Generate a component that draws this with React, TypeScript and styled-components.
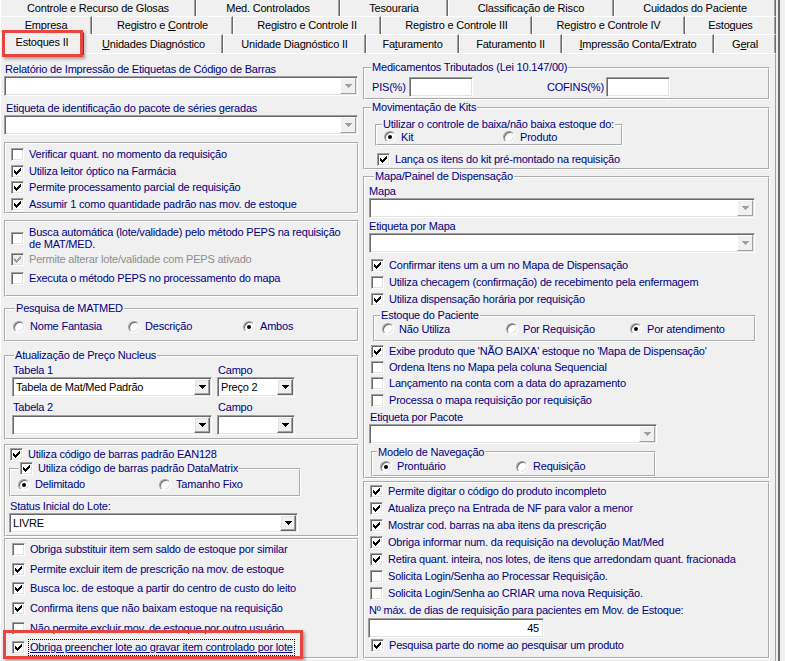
import React from "react";
import styled, { createGlobalStyle, css } from "styled-components";

const NAVY = "#000080";

const GlobalStyle = createGlobalStyle`
  html, body { margin: 0; padding: 0; background: #f0f0f0; }
  body {
    font-family: "Liberation Sans", Arial, sans-serif;
    font-size: 11px;
    letter-spacing: -0.2px;
  }
  * { box-sizing: border-box; }
`;

const Screen = styled.div`
  position: relative;
  width: 785px;
  height: 661px;
  overflow: hidden;
  display: flex;
  background: #f0f0f0;
`;

const Window = styled.div`
  width: 778px;
  flex-shrink: 0;
  display: flex;
  flex-direction: column;
`;

const EdgeBar = styled.div`
  width: 2px;
  flex-shrink: 0;
  background: #6b6b6b;
`;

/* ---------- tab strip ---------- */

const TabStrip = styled.div`
  width: 776px;
  display: flex;
  flex-direction: column;
`;

const TabRow = styled.div<{ $h: number }>`
  display: flex;
  height: ${(p) => p.$h}px;
`;

const Tab = styled.div<{ $w: number; $flat?: boolean; $open?: boolean }>`
  position: relative;
  width: ${(p) => p.$w}px;
  flex-shrink: 0;
  display: flex;
  align-items: center;
  justify-content: center;
  border-top: ${(p) => (p.$flat ? "none" : "1px solid #fff")};
  border-left: 1px solid #fff;
  border-right: 1px solid #696969;
  box-shadow: inset -1px 0 0 #a0a0a0;
  color: #000;
  line-height: 13px;
  white-space: nowrap;
  background: #f0f0f0;
  ${(p) =>
    p.$open &&
    css`
      z-index: 2;
      align-self: flex-start;
      margin-top: -2px;
      height: calc(100% + 4px);
      padding-bottom: 4px;
    `}
  u { text-decoration: underline; }
`;

const TabLabel = styled.span`
  white-space: pre;
`;

/* ---------- page ---------- */

const Page = styled.div`
  flex: 1;
  width: 776px;
  border-top: 1px solid #fff;
  border-left: 1px solid #fff;
  border-right: 1px solid #a0a0a0;
  display: flex;
  align-items: flex-start;
  gap: 4px;
  padding-left: 3px;
`;

const Column = styled.div<{ $w: number }>`
  width: ${(p) => p.$w}px;
  flex-shrink: 0;
  display: flex;
  flex-direction: column;
`;

const Group = styled.fieldset<{ $w: number; $h: number; $mt?: number; $ml?: number }>`
  margin: ${(p) => p.$mt ?? 0}px 0 0 ${(p) => p.$ml ?? 0}px;
  padding: 0;
  min-width: 0;
  width: ${(p) => p.$w}px;
  height: ${(p) => p.$h}px;
  flex-shrink: 0;
  border: 2px groove #fff;
  display: flex;
  flex-direction: column;
`;

const Caption = styled.legend<{ $ml: number }>`
  margin-left: ${(p) => p.$ml}px;
  padding: 0 1px;
  height: 13px;
  line-height: 13px;
  color: ${NAVY};
  display: flex;
  align-items: center;
  white-space: nowrap;
`;

const Label = styled.div<{ $mt?: number; $ml?: number }>`
  height: 13px;
  line-height: 13px;
  color: ${NAVY};
  white-space: nowrap;
  margin-top: ${(p) => p.$mt ?? 0}px;
  margin-left: ${(p) => p.$ml ?? 0}px;
`;

const sunken = css`
  border: 1px solid;
  border-color: #a0a0a0 #fff #fff #a0a0a0;
  box-shadow: inset 1px 1px 0 #696969, inset -1px -1px 0 #e3e3e3;
  background: #fff;
`;

const ComboFrame = styled.div<{ $w: number; $mt?: number; $ml?: number }>`
  ${sunken}
  width: ${(p) => p.$w}px;
  height: 20px;
  flex-shrink: 0;
  margin-top: ${(p) => p.$mt ?? 0}px;
  margin-left: ${(p) => p.$ml ?? 0}px;
  padding: 1px;
  display: flex;
  align-items: stretch;
`;

const ComboText = styled.div`
  flex: 1;
  display: flex;
  align-items: center;
  padding-left: 2px;
  color: #000;
  line-height: 13px;
  white-space: nowrap;
`;

const DropButton = styled.div<{ $off?: boolean }>`
  width: 16px;
  flex-shrink: 0;
  display: flex;
  align-items: center;
  justify-content: center;
  background: #f0f0f0;
  border: 1px solid;
  border-color: #fff #696969 #696969 #fff;
  box-shadow: inset -1px -1px 0 #a0a0a0, inset 1px 1px 0 #e3e3e3;
  color: ${(p) => (p.$off ? "#a0a0a0" : "#000")};
  ${(p) =>
    p.$off &&
    css`
      border-color: #fff #a0a0a0 #a0a0a0 #fff;
      box-shadow: none;
    `}
`;

const EditBox = styled.div<{ $w: number; $mt?: number; $ml?: number }>`
  ${sunken}
  width: ${(p) => p.$w}px;
  height: 20px;
  flex-shrink: 0;
  margin-top: ${(p) => p.$mt ?? 0}px;
  margin-left: ${(p) => p.$ml ?? 0}px;
  padding: 0 4px;
  display: flex;
  align-items: center;
  justify-content: flex-end;
  color: #000;
  line-height: 13px;
`;

const OptionRow = styled.div<{ $h?: number; $mt?: number; $ml?: number }>`
  display: flex;
  align-items: center;
  height: ${(p) => p.$h ?? 17}px;
  margin-top: ${(p) => p.$mt ?? 0}px;
  margin-left: ${(p) => p.$ml ?? 0}px;
  flex-shrink: 0;
`;

const BoxGlyph = styled.span<{ $off?: boolean }>`
  width: 13px;
  height: 13px;
  flex-shrink: 0;
  display: inline-flex;
  align-items: center;
  justify-content: center;
  border: 1px solid;
  border-color: #a0a0a0 #fff #fff #a0a0a0;
  box-shadow: inset 1px 1px 0 #696969, inset -1px -1px 0 #e3e3e3;
  background: ${(p) => (p.$off ? "#f0f0f0" : "#fff")};
  color: ${(p) => (p.$off ? "#a0a0a0" : "#000")};
`;

const RadioGlyph = styled.span<{ $on?: boolean }>`
  width: 12px;
  height: 12px;
  flex-shrink: 0;
  border-radius: 50%;
  border: 1px solid;
  border-color: #a0a0a0 #fff #fff #a0a0a0;
  box-shadow: inset 1px 1px 0 #696969, inset -1px -1px 0 #e3e3e3;
  background: #fff;
  display: flex;
  align-items: center;
  justify-content: center;
  &::after {
    content: "";
    width: 4px;
    height: 4px;
    border-radius: 50%;
    background: #000;
    display: ${(p) => (p.$on ? "block" : "none")};
  }
`;

const OptionText = styled.span<{ $off?: boolean; $lh?: number; $focus?: boolean }>`
  margin-left: 5px;
  color: ${(p) => (p.$off ? "#8d8d8d" : NAVY)};
  line-height: ${(p) => p.$lh ?? 13}px;
  white-space: nowrap;
  ${(p) =>
    p.$focus &&
    css`
      text-decoration: underline;
      outline: 1px dotted #000;
      outline-offset: 1px;
    `}
`;

const RadioRow = styled.div<{ $h: number; $pl: number; $mt?: number }>`
  display: flex;
  align-items: center;
  height: ${(p) => p.$h}px;
  padding-left: ${(p) => p.$pl}px;
  margin-top: ${(p) => p.$mt ?? 0}px;
  flex-shrink: 0;
`;

const RadioItem = styled.div<{ $w?: number }>`
  display: flex;
  align-items: center;
  flex-shrink: 0;
  width: ${(p) => (p.$w ? `${p.$w}px` : "auto")};
`;

const FieldPair = styled.div<{ $mt: number }>`
  display: flex;
  gap: 5px;
  margin-top: ${(p) => p.$mt}px;
  padding-left: 6px;
`;

const FieldCell = styled.div`
  display: flex;
  flex-direction: column;
`;

const TaxRow = styled.div`
  display: grid;
  grid-template-columns: 37px 64px 74px 59px 64px;
  align-items: center;
  height: 20px;
  margin-top: 3px;
  padding-left: 7px;
`;

const TaxLabel = styled.span`
  color: ${NAVY};
  line-height: 13px;
  white-space: nowrap;
`;

const Callout = styled.div<{ $x: number; $y: number; $w: number; $h: number }>`
  position: absolute;
  left: ${(p) => p.$x}px;
  top: ${(p) => p.$y}px;
  width: ${(p) => p.$w}px;
  height: ${(p) => p.$h}px;
  border: 3px solid #e8453f;
  box-shadow: 2px 2px 3px rgba(0, 0, 0, 0.35);
  pointer-events: none;
  z-index: 5;
`;

/* ---------- small drawings ---------- */

const CheckMark = () => (
  <svg width="7" height="7" viewBox="0 0 7 7" shapeRendering="crispEdges">
    <path
      fill="currentColor"
      d="M6 0h1v1H6zM5 1h2v1H5zM0 2h1v1H0zM4 2h3v1H4zM0 3h2v1H0zM3 3h3v1H3zM0 4h5v1H0zM1 5h3v1H1zM2 6h1v1H2z"
    />
  </svg>
);

const DownArrow = () => (
  <svg width="7" height="4" viewBox="0 0 7 4" shapeRendering="crispEdges">
    <path fill="currentColor" d="M0 0h7v1H0zM1 1h5v1H1zM2 2h3v1H2zM3 3h1v1H3z" />
  </svg>
);

/* ---------- widgets ---------- */

type CheckProps = {
  on?: boolean;
  off?: boolean;
  h?: number;
  mt?: number;
  ml?: number;
  lh?: number;
  focus?: boolean;
  children: React.ReactNode;
};

const Check = ({ on, off, h, mt, ml, lh, focus, children }: CheckProps) => (
  <OptionRow $h={h} $mt={mt} $ml={ml}>
    <BoxGlyph $off={off}>{on && <CheckMark />}</BoxGlyph>
    <OptionText $off={off} $lh={lh} $focus={focus}>
      {children}
    </OptionText>
  </OptionRow>
);

const Radio = ({ on, w, children }: { on?: boolean; w?: number; children: React.ReactNode }) => (
  <RadioItem $w={w}>
    <RadioGlyph $on={on} />
    <OptionText>{children}</OptionText>
  </RadioItem>
);

const Combo = ({
  w,
  mt,
  ml,
  value,
  off,
}: {
  w: number;
  mt?: number;
  ml?: number;
  value?: string;
  off?: boolean;
}) => (
  <ComboFrame $w={w} $mt={mt} $ml={ml}>
    <ComboText>{value}</ComboText>
    <DropButton $off={off}>
      <DownArrow />
    </DropButton>
  </ComboFrame>
);

/* ---------- data ---------- */

type TabDef = { label: React.ReactNode; w: number; open?: boolean };

const tabRows: { h: number; flat?: boolean; tabs: TabDef[] }[] = [
  {
    h: 16,
    flat: true,
    tabs: [
      { label: "Controle e Recurso de Glosas", w: 196 },
      { label: "Med. Controlados", w: 144 },
      { label: "Tesouraria", w: 108 },
      { label: "Classificação de Risco", w: 166 },
      { label: "Cuidados do Paciente", w: 162 },
    ],
  },
  {
    h: 18,
    tabs: [
      { label: "Empresa", w: 92 },
      { label: <>Registro e <u>C</u>ontrole</>, w: 141 },
      { label: "Registro e Controle II", w: 148 },
      { label: "Registro e Controle III", w: 151 },
      { label: "Registro e Controle IV", w: 153 },
      { label: <>Esto<u>q</u>ues</>, w: 91 },
    ],
  },
  {
    h: 19,
    tabs: [
      { label: "Estoques II", w: 84, open: true },
      { label: <><u>U</u>nidades Diagnóstico</>, w: 139 },
      { label: "Unidade Diagnóstico II", w: 143 },
      { label: <>Fa<u>t</u>uramento</>, w: 93 },
      { label: "Faturamento II", w: 103 },
      { label: <><u>I</u>mpressão Conta/Extrato</>, w: 152 },
      { label: <>G<u>e</u>ral</>, w: 62 },
    ],
  },
];

export default function App() {
  return (
    <>
      <GlobalStyle />
      <Screen>
        <Window>
          <TabStrip>
            {tabRows.map((row, i) => (
              <TabRow key={i} $h={row.h}>
                {row.tabs.map((t, j) => (
                  <Tab key={j} $w={t.w} $flat={row.flat} $open={t.open}>
                    <TabLabel>{t.label}</TabLabel>
                  </Tab>
                ))}
              </TabRow>
            ))}
          </TabStrip>

          <Page>
            {/* left column */}
            <Column $w={355}>
              <Label $mt={9} $ml={1}>
                Relatório de Impressão de Etiquetas de Código de Barras
              </Label>
              <Combo w={354} off />
              <Label $mt={6} $ml={2}>
                Etiqueta de identificação do pacote de séries geradas
              </Label>
              <Combo w={354} off />

              <Group $w={355} $h={72} $mt={7}>
                <Check ml={5} mt={2} h={16.7}>Verificar quant. no momento da requisição</Check>
                <Check ml={5} h={16.7} on>Utiliza leitor óptico na Farmácia</Check>
                <Check ml={5} h={16.7} on>Permite processamento parcial de requisição</Check>
                <Check ml={5} h={16.7} on>Assumir 1 como quantidade padrão nas mov. de estoque</Check>
              </Group>

              <Group $w={355} $h={77} $mt={6}>
                <Check ml={5} mt={4} h={24} lh={12}>
                  Busca automática (lote/validade) pelo método PEPS na requisição
                  <br />
                  de MAT/MED.
                </Check>
                <Check ml={5} mt={1} on off>Permite alterar lote/validade com PEPS ativado</Check>
                <Check ml={5} mt={2}>Executa o método PEPS no processamento do mapa</Check>
              </Group>

              <Group $w={355} $h={40} $mt={5}>
                <Caption $ml={9}>Pesquisa de MATMED</Caption>
                <RadioRow $h={17} $pl={7} $mt={3}>
                  <Radio w={115}>Nome Fantasia</Radio>
                  <Radio w={115}>Descrição</Radio>
                  <Radio on>Ambos</Radio>
                </RadioRow>
              </Group>

              <Group $w={355} $h={91} $mt={7}>
                <Caption $ml={8}>Atualização de Preço Nucleus</Caption>
                <FieldPair $mt={2}>
                  <FieldCell>
                    <Label $ml={1}>Tabela 1</Label>
                    <Combo w={200} value="Tabela de Mat/Med Padrão" />
                  </FieldCell>
                  <FieldCell>
                    <Label $ml={1}>Campo</Label>
                    <Combo w={78} value="Preço 2" />
                  </FieldCell>
                </FieldPair>
                <FieldPair $mt={4}>
                  <FieldCell>
                    <Label $ml={1}>Tabela 2</Label>
                    <Combo w={200} mt={1} />
                  </FieldCell>
                  <FieldCell>
                    <Label $ml={1}>Campo</Label>
                    <Combo w={78} mt={1} />
                  </FieldCell>
                </FieldPair>
              </Group>

              <Group $w={355} $h={93} $mt={4}>
                <Check ml={4} h={16} on>Utiliza código de barras padrão EAN128</Check>
                <Group $w={292} $h={35} $ml={3}>
                  <Caption $ml={8}>
                    <BoxGlyph>
                      <CheckMark />
                    </BoxGlyph>
                    <OptionText>Utiliza código de barras padrão DataMatrix</OptionText>
                  </Caption>
                  <RadioRow $h={17} $pl={7} $mt={1}>
                    <Radio w={141} on>Delimitado</Radio>
                    <Radio>Tamanho Fixo</Radio>
                  </RadioRow>
                </Group>
                <Label $mt={3} $ml={4}>Status Inicial do Lote:</Label>
                <Combo w={289} ml={3} value="LIVRE" />
              </Group>

              <Group $w={355} $h={121} $mt={1}>
                <Check ml={6} h={19.6}>Obriga substituir item sem saldo de estoque por similar</Check>
                <Check ml={6} h={19.6} on>Permite excluir item de prescrição na mov. de estoque</Check>
                <Check ml={6} h={19.6} on>Busca loc. de estoque a partir do centro de custo do leito</Check>
                <Check ml={6} h={19.6} on>Confirma itens que não baixam estoque na requisição</Check>
                <Check ml={6} h={19.6}>Não permite excluir mov. de estoque por outro usuário</Check>
                <Check ml={6} h={19.6} on focus>
                  Obriga preencher lote ao gravar item controlado por lote
                </Check>
              </Group>
            </Column>

            {/* right column */}
            <Column $w={407}>
              <Group $w={407} $h={39} $mt={7}>
                <Caption $ml={6}>Medicamentos Tributados (Lei 10.147/00)</Caption>
                <TaxRow>
                  <TaxLabel>PIS(%)</TaxLabel>
                  <EditBox $w={64} />
                  <span />
                  <TaxLabel>COFINS(%)</TaxLabel>
                  <EditBox $w={64} />
                </TaxRow>
              </Group>

              <Group $w={407} $h={69} $mt={1}>
                <Caption $ml={6}>Movimentação de Kits</Caption>
                <Group $w={248} $h={28} $mt={4} $ml={10}>
                  <Caption $ml={5}>Utilizar o controle de baixa/não baixa estoque do:</Caption>
                  <RadioRow $h={12} $pl={7}>
                    <Radio w={119} on>Kit</Radio>
                    <Radio>Produto</Radio>
                  </RadioRow>
                </Group>
                <Check ml={12} mt={5} on>Lança os itens do kit pré-montado na requisição</Check>
              </Group>

              <Group $w={407} $h={309}>
                <Caption $ml={9}>Mapa/Painel de Dispensação</Caption>
                <Label $mt={2} $ml={4}>Mapa</Label>
                <Combo w={386} ml={4} off />
                <Label $mt={2} $ml={4}>Etiqueta por Mapa</Label>
                <Combo w={386} ml={4} off />
                <Check ml={6} mt={4} on>Confirmar itens um a um no Mapa de Dispensação</Check>
                <Check ml={6}>Utiliza checagem (confirmação) de recebimento pela enfermagem</Check>
                <Check ml={6} on>Utiliza dispensação horária por requisição</Check>
                <Group $w={383} $h={33} $mt={1} $ml={8}>
                  <Caption $ml={5}>Estoque do Paciente</Caption>
                  <RadioRow $h={14} $pl={7}>
                    <Radio w={124}>Não Utiliza</Radio>
                    <Radio w={124}>Por Requisição</Radio>
                    <Radio on>Por atendimento</Radio>
                  </RadioRow>
                </Group>
                <Check ml={6} mt={1} h={16.4} on>
                  Exibe produto que 'NÃO BAIXA' estoque no 'Mapa de Dispensação'
                </Check>
                <Check ml={6} h={16.4}>Ordena Itens no Mapa pela coluna Sequencial</Check>
                <Check ml={6} h={16.4}>Lançamento na conta com a data do aprazamento</Check>
                <Check ml={6} h={16.4}>Processa o mapa requisição por requisição</Check>
                <Label $mt={2} $ml={5}>Etiqueta por Pacote</Label>
                <Combo w={288} ml={4} off />
                <Group $w={285} $h={31} $mt={2} $ml={6}>
                  <Caption $ml={4}>Modelo de Navegação</Caption>
                  <RadioRow $h={16} $pl={7}>
                    <Radio w={136} on>Prontuário</Radio>
                    <Radio>Requisição</Radio>
                  </RadioRow>
                </Group>
              </Group>

              <Group $w={407} $h={178} $mt={2}>
                <Check ml={5} on>Permite digitar o código do produto incompleto</Check>
                <Check ml={5} on>Atualiza preço na Entrada de NF para valor a menor</Check>
                <Check ml={5} on>Mostrar cod. barras na aba itens da prescrição</Check>
                <Check ml={5} on>Obriga informar num. da requisição na devolução Mat/Med</Check>
                <Check ml={5} on>
                  Retira quant. inteira, nos lotes, de itens que arredondam quant. fracionada
                </Check>
                <Check ml={5}>Solicita Login/Senha ao Processar Requisição.</Check>
                <Check ml={5}>Solicita Login/Senha ao CRIAR uma nova Requisição.</Check>
                <Label $mt={2} $ml={4}>
                  Nº máx. de dias de requisição para pacientes em Mov. de Estoque:
                </Label>
                <EditBox $w={176} $mt={1} $ml={3}>45</EditBox>
                <Check ml={6} h={14} on>Pesquisa parte do nome ao pesquisar um produto</Check>
              </Group>
            </Column>
          </Page>
        </Window>
        <EdgeBar />

        <Callout $x={2} $y={30} $w={81} $h={27} />
        <Callout $x={3} $y={630} $w={300} $h={29} />
      </Screen>
    </>
  );
}
